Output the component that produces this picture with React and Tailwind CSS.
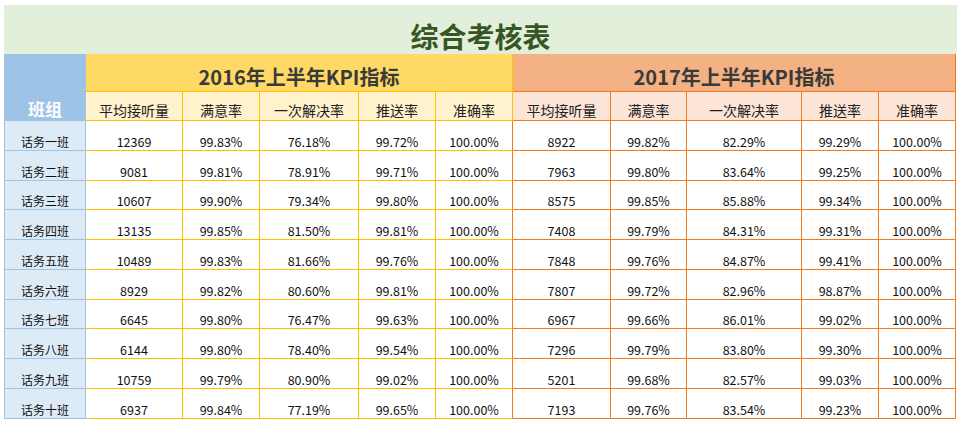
const cols16 = ["平均接听量", "满意率", "一次解决率", "推送率", "准确率"];

const rows = [
  ["话务一班", "12369", "99.83%", "76.18%", "99.72%", "100.00%", "8922", "99.82%", "82.29%", "99.29%", "100.00%"],
  ["话务二班", "9081", "99.81%", "78.91%", "99.71%", "100.00%", "7963", "99.80%", "83.64%", "99.25%", "100.00%"],
  ["话务三班", "10607", "99.90%", "79.34%", "99.80%", "100.00%", "8575", "99.85%", "85.88%", "99.34%", "100.00%"],
  ["话务四班", "13135", "99.85%", "81.50%", "99.81%", "100.00%", "7408", "99.79%", "84.31%", "99.31%", "100.00%"],
  ["话务五班", "10489", "99.83%", "81.66%", "99.76%", "100.00%", "7848", "99.76%", "84.87%", "99.41%", "100.00%"],
  ["话务六班", "8929", "99.82%", "80.60%", "99.81%", "100.00%", "7807", "99.72%", "82.96%", "98.87%", "100.00%"],
  ["话务七班", "6645", "99.80%", "76.47%", "99.63%", "100.00%", "6967", "99.66%", "86.01%", "99.02%", "100.00%"],
  ["话务八班", "6144", "99.80%", "78.40%", "99.54%", "100.00%", "7296", "99.79%", "83.80%", "99.30%", "100.00%"],
  ["话务九班", "10759", "99.79%", "80.90%", "99.02%", "100.00%", "5201", "99.68%", "82.57%", "99.03%", "100.00%"],
  ["话务十班", "6937", "99.84%", "77.19%", "99.65%", "100.00%", "7193", "99.76%", "83.54%", "99.23%", "100.00%"],
];

const grid =
  "grid grid-cols-[82px_97px_77px_99px_77px_77px_98px_76px_115px_77px_77px]";

function DataRow({ row, idx }) {
  const h = idx === 2 || idx === 6 ? "h-[29px]" : "h-[30px]";
  return (
    <div className={cn(grid, h)}>
      {row.map((v, i) => (
        <div
          key={i}
          className={cn(
            "flex items-end justify-center border-b pb-[1px] leading-[15px] text-[12.5px] text-[#111]",
            i === 0 && "border-x border-[#9dc3e6] bg-[#ddebf7] text-[12px]",
            i > 0 && i < 5 && "border-r border-[#ffc000]",
            i === 5 && "border-r border-b-[#ffc000] border-r-[#f47a20]",
            i > 5 && "border-r border-[#f47a20]"
          )}
        >
          {v}
        </div>
      ))}
    </div>
  );
}

function cn(...c) {
  return c.filter(Boolean).join(" ");
}

export default function App() {
  return (
    <div
      className="min-h-[423px] bg-white pl-[4px] pt-[5px]"
      style={{ fontFamily: '"Noto Sans CJK SC", "Noto Sans", sans-serif' }}
    >
      <div className="w-[953px]">
        <div className="flex h-[49px] items-end justify-center bg-[#e2efda] pb-[1px]">
          <span className="text-[28px] font-bold leading-[34px] text-[#375623]">综合考核表</span>
        </div>

        <div className={cn(grid, "grid-rows-[38px_29px] w-[952px]")}>
          <div className="row-span-2 flex items-end justify-center bg-[#9dc3e6] pb-[1px] text-[17px] font-bold leading-[22px] text-white">
            班组
          </div>
          <div className="col-span-5 flex items-end justify-center border-b border-r border-[#ffc000] bg-[#ffd966] pb-[1px] text-[20px] font-bold leading-[26px] text-[#3a3a3a]">
            2016年上半年KPI指标
          </div>
          <div className="col-span-5 flex items-end justify-center border-b border-r border-[#f47a20] bg-[#f4b183] pb-[1px] text-[20px] font-bold leading-[26px] text-[#3a3a3a]">
            2017年上半年KPI指标
          </div>
          {cols16.map((c) => (
            <div
              key={"a" + c}
              className="flex items-end justify-center border-b border-r border-[#ffc000] bg-[#fff2cc] pb-[1px] text-[14px] leading-[18px] text-[#222]"
            >
              {c}
            </div>
          ))}
          {cols16.map((c) => (
            <div
              key={"b" + c}
              className="flex items-end justify-center border-b border-r border-[#f47a20] bg-[#fce4d6] pb-[1px] text-[14px] leading-[18px] text-[#222]"
            >
              {c}
            </div>
          ))}
        </div>

        <div className="w-[952px]">
          {rows.map((r, i) => (
            <DataRow key={r[0]} row={r} idx={i} />
          ))}
        </div>
      </div>
    </div>
  );
}
